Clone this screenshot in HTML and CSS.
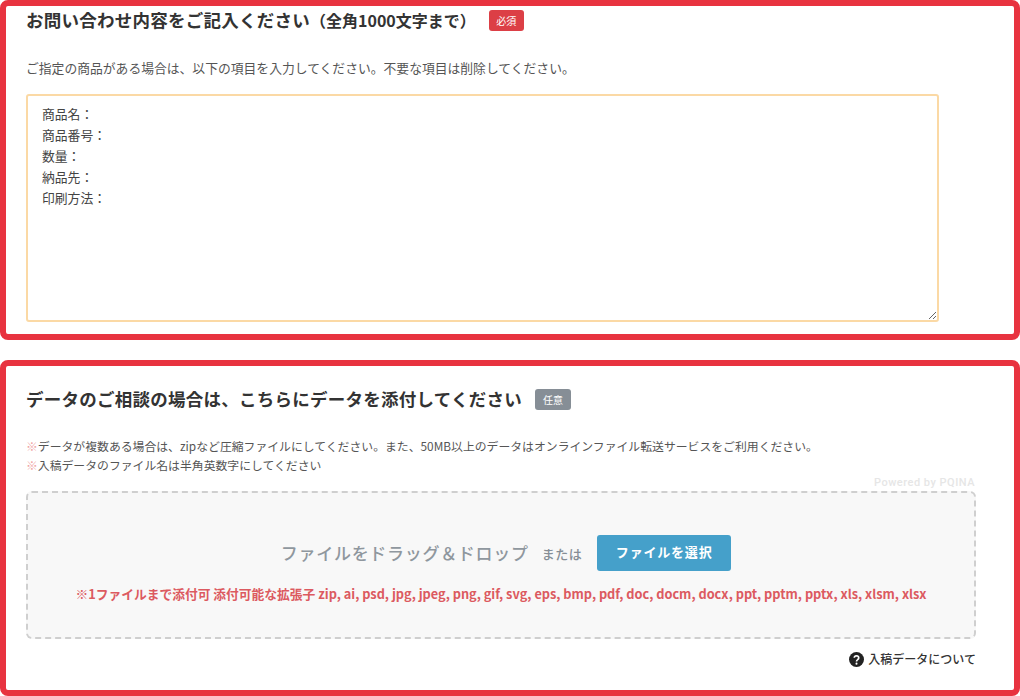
FILE: index.html
```html
<!DOCTYPE html>
<html lang="ja">
<head>
<meta charset="utf-8">
<title>お問い合わせ</title>
<link rel="stylesheet" href="styles.css">
</head>
<body>
<section class="panel panel-top">
  <div class="heading heading-top">
    <h2 class="title">お問い合わせ内容をご記入ください<span class="title-sub">（全角1000文字まで）</span></h2>
    <span class="badge badge-red">必須</span>
  </div>
  <p class="lead">ご指定の商品がある場合は、以下の項目を入力してください。不要な項目は削除してください。</p>
  <textarea class="message" spellcheck="false">商品名：
商品番号：
数量：
納品先：
印刷方法：</textarea>
</section>
<section class="panel panel-bottom">
  <div class="heading heading-bottom">
    <h2 class="title">データのご相談の場合は、こちらにデータを添付してください</h2>
    <span class="badge badge-grey">任意</span>
  </div>
  <p class="note"><span class="mark">※</span>データが複数ある場合は、zipなど圧縮ファイルにしてください。また、50MB以上のデータはオンラインファイル転送サービスをご利用ください。</p>
  <p class="note"><span class="mark">※</span>入稿データのファイル名は半角英数字にしてください</p>
  <div class="powered">Powered by PQINA</div>
  <div class="drop">
    <div class="drop-row">
      <span class="drop-text">ファイルをドラッグ＆ドロップ</span>
      <span class="drop-or">または</span>
      <span class="drop-btn">ファイルを選択</span>
    </div>
    <p class="drop-limit">※1ファイルまで添付可 添付可能な拡張子 zip, ai, psd, jpg, jpeg, png, gif, svg, eps, bmp, pdf, doc, docm, docx, ppt, pptm, pptx, xls, xlsm, xlsx</p>
  </div>
  <div class="help">
    <svg class="help-icon" viewBox="0 0 16 16" aria-hidden="true"><circle cx="8" cy="8" r="8" fill="#222"/><path d="M5.6 6.2a2.4 2.2 0 1 1 3.7 1.9c-.9.6-1.3 1-1.3 2" fill="none" stroke="#fff" stroke-width="1.8"/><circle cx="8" cy="12.4" r="1.1" fill="#fff"/></svg>
    <span>入稿データについて</span>
  </div>
</section>
</body>
</html>
```
FILE: styles.css
```css
* { box-sizing: border-box; }
html, body { margin: 0; padding: 0; background: #fff; }
body {
  width: 1020px;
  height: 696px;
  overflow: hidden;
  display: flex;
  flex-direction: column;
  gap: 20px;
  font-family: "Noto Sans CJK JP", "Noto Sans", sans-serif;
  color: #333;
}
.panel {
  border: 6px solid #e83340;
  border-radius: 8px;
  padding: 0 20px;
  background: #fff;
}
.panel-top { height: 340px; }
.panel-bottom { height: 336px; }
.heading { display: flex; align-items: center; }
.heading-top { height: 28px; }
.heading-bottom { height: 22px; margin-top: 22px; }
.title {
  margin: 0;
  font-size: 17.5px;
  line-height: 22px;
  font-weight: 700;
  letter-spacing: 0.25px;
  color: #333;
  white-space: nowrap;
}
.title-sub { font-size: 16px; letter-spacing: 0; }
.badge {
  display: block;
  width: 36px;
  height: 21px;
  border-radius: 3px;
  color: #fff;
  font-size: 10px;
  line-height: 21px;
  text-align: center;
}
.badge-red { background: #dc3f46; margin-left: 13px; width: 35px; }
.badge-grey { background: #868e96; margin-left: 13px; }
.lead {
  margin: 24px 0 0;
  font-size: 12.8px;
  line-height: 20px;
  color: #555;
  white-space: nowrap;
}
.message {
  display: block;
  width: 913px;
  height: 228px;
  margin-top: 16px;
  padding: 7px 14px;
  border: 2px solid #fbd9a5;
  border-radius: 3px;
  outline: none;
  background: #fff;
  color: #444;
  font-family: inherit;
  font-size: 12.8px;
  line-height: 21px;
  resize: both;
}
.note {
  margin: 0;
  font-size: 11.85px;
  line-height: 19px;
  color: #555;
  white-space: nowrap;
}
.heading-bottom + .note { margin-top: 26px; }
.mark { color: #f0a5a5; }
.powered {
  width: 950px;
  padding-right: 1px;
  text-align: right;
  font-family: Roboto, "Liberation Sans", sans-serif;
  font-size: 11px;
  font-weight: 500;
  line-height: 17px;
  color: #e6e6e6;
  letter-spacing: 0.5px;
}
.drop {
  width: 950px;
  height: 148px;
  border: 2px dashed #cfcfcf;
  border-radius: 6px;
  background: #f8f8f8;
  padding-top: 42px;
}
.drop-row { display: flex; align-items: center; justify-content: center; height: 36px; padding-left: 10px; }
.drop-text { font-size: 17px; font-weight: 500; letter-spacing: 0.7px; color: #8f979e; margin-bottom: 2px; }
.drop-or { font-size: 13px; font-weight: 500; letter-spacing: 0.5px; color: #868e96; margin-left: 13px; }
.drop-btn {
  margin-left: 15px;
  width: 134px;
  height: 36px;
  border-radius: 3px;
  background: #45a0ca;
  color: #fff;
  font-size: 13px;
  font-weight: 700;
  line-height: 34px;
  letter-spacing: 0.8px;
  text-align: center;
}
.drop-limit {
  margin: 13px 0 0;
  text-align: center;
  font-size: 12.75px;
  font-weight: 700;
  line-height: 20px;
  color: #dc5a60;
  white-space: nowrap;
}
.help {
  display: flex;
  align-items: center;
  justify-content: flex-end;
  gap: 4px;
  width: 950px;
  margin-top: 11px;
  font-size: 12px;
  line-height: 18px;
  font-weight: 500;
  color: #333;
}
.help-icon { width: 15px; height: 15px; }
```
